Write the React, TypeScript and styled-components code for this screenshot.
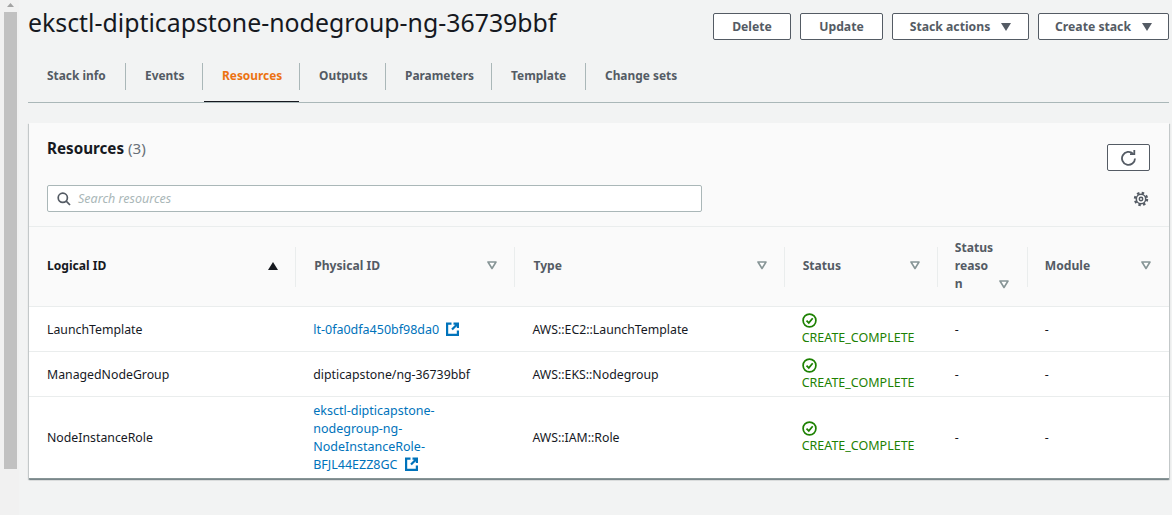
import { FC, ReactNode } from 'react';
import styled, { createGlobalStyle } from 'styled-components';

const GlobalStyle = createGlobalStyle`
  html, body {
    margin: 0;
    padding: 0;
    background: #f2f3f3;
    font-family: "Noto Sans", Roboto, sans-serif;
    overflow: hidden;
  }
`

const Page = styled.div`
  display: flex;
  width: 1172px;
  height: 515px;
  box-sizing: border-box;
  color: #16191f;
`
const Track = styled.div`
  width: 19px;
  flex: none;
  box-sizing: border-box;
  padding-left: 4px;
  background: #f1f1f1;
`
const TrackArrow = styled.div`
  width: 13px;
  height: 12px;
  padding-bottom: 3px;
  box-sizing: border-box;
  display: flex;
  justify-content: center;
  align-items: center;
`
const Thumb = styled.div`
  width: 13px;
  height: 457px;
  background: #c1c1c1;
`
const Main = styled.main`
  flex: 1;
  min-width: 0;
  padding: 0 3px 0 9px;
`
const Header = styled.header`
  display: flex;
  justify-content: space-between;
  height: 63px;
`
const Title = styled.h1`
  margin: 0;
  font-size: 24.85px;
  line-height: 32px;
  font-weight: 400;
  padding-top: 6px;
  color: #16191f;
`
const Actions = styled.div`
  display: flex;
  gap: 9px;
  padding-top: 13px;
`
const Button = styled.button<{ $width: number }>`
  width: ${p => p.$width}px;
  height: 27px;
  box-sizing: border-box;
  display: flex;
  align-items: center;
  justify-content: center;
  gap: 11px;
  padding: 0;
  border: 1px solid #545b64;
  border-radius: 2px;
  background: #fff;
  color: #545b64;
  font: 700 12.2px "Noto Sans", sans-serif;
`
const Tabs = styled.nav`
  display: flex;
  height: 40px;
  border-bottom: 1px solid #aab7b8;
  box-sizing: border-box;
`
const Tab = styled.div<{ $active?: boolean; $width: number }>`
  position: relative;
  width: ${p => p.$width}px;
  height: 27px;
  box-sizing: border-box;
  padding: 4px 0 0 19px;
  font-size: 11.9px;
  font-weight: 700;
  line-height: 16px;
  color: ${p => (p.$active ? '#ec7211' : '#545b64')};
  border-right: 1px solid #aab7b8;
  &:last-child {
    border-right: 0;
  }
  ${p => p.$active && `
    &::after {
      content: '';
      position: absolute;
      left: 1px;
      right: 0;
      bottom: -12px;
      height: 1px;
      background: #16191f;
    }
  `}
`
const Card = styled.section`
  margin: 20px 0 0 1px;
  background: #fff;
  box-shadow: 0 1px 1px 0 rgba(0, 28, 36, 0.3), 1px 1px 1px 0 rgba(0, 28, 36, 0.15), -1px 1px 1px 0 rgba(0, 28, 36, 0.15);
  border-bottom: 1px solid #879596;
`
const CardTop = styled.div`
  display: grid;
  grid-template-columns: 1fr auto;
  grid-template-rows: 47px 27px;
  align-items: center;
  height: 104px;
  box-sizing: border-box;
  padding: 15px 19px 15px 18px;
  background: #fafafa;
  border-bottom: 1px solid #eaeded;
`
const CardTitle = styled.h2`
  margin: 0;
  font-size: 15.2px;
  line-height: 20px;
  font-weight: 700;
  align-self: start;
  color: #16191f;
`
const Count = styled.span`
  font-weight: 400;
  color: #687078;
`
const RefreshButton = styled.button`
  width: 43px;
  height: 27px;
  margin-top: 6px;
  display: flex;
  align-items: center;
  justify-content: center;
  padding: 0;
  border: 1px solid #545b64;
  border-radius: 2px;
  background: #fff;
  color: #545b64;
  justify-self: end;
  align-self: start;
`
const SearchBox = styled.div`
  width: 655px;
  height: 27px;
  box-sizing: border-box;
  display: flex;
  align-items: center;
  gap: 7px;
  padding-left: 9px;
  border: 1px solid #aab7b8;
  border-radius: 2px;
  background: #fff;
  color: #545b64;
`
const SearchText = styled.span`
  font-size: 12.5px;
  font-style: italic;
  color: #aab7b8;
`
const Gear = styled.div`
  display: flex;
  justify-self: end;
  margin-right: 1px;
  color: #545b64;
`
const Table = styled.table`
  width: 100%;
  table-layout: fixed;
  border-collapse: collapse;
`
const HeadCell = styled.th<{ $width: number }>`
  width: ${p => p.$width}px;
  height: 79px;
  padding: 0;
  text-align: left;
  background: #fafafa;
  border-bottom: 1px solid #eaeded;
  vertical-align: middle;
`
const HeadInner = styled.div<{ $last?: boolean }>`
  position: relative;
  box-sizing: border-box;
  height: 40px;
  display: flex;
  align-items: center;
  justify-content: space-between;
  padding: 0 ${p => (p.$last ? 18 : 17)}px 2px ${p => (p.$last ? 17 : 18)}px;
  border-right: ${p => (p.$last ? '0' : '1px solid #eaeded')};
`
const HeadLabel = styled.span<{ $sorted?: boolean }>`
  font-size: 12.1px;
  line-height: 18px;
  font-weight: 700;
  color: ${p => (p.$sorted ? '#16191f' : '#545b64')};
`
const WrappedHead = styled(HeadInner)`
  align-items: flex-end;
  padding: 0 18px 0 17px;
  & > svg {
    margin-bottom: -2px;
  }
`
const WrappedLabel = styled(HeadLabel)`
  width: 40px;
  margin-bottom: -6px;
  word-break: break-all;
  flex: none;
`
const Row = styled.tr<{ $height: number }>`
  height: ${p => p.$height}px;
  & + tr td {
    border-top: 1px solid #eaeded;
  }
`
const Cell = styled.td`
  padding: 1px 18px 0 17px;
  font-size: 12.3px;
  line-height: 18px;
  color: #16191f;
  vertical-align: middle;
  overflow-wrap: break-word;
  &:first-child {
    padding-left: 18px;
  }
`
const Link = styled.a`
  color: #0073bb;
  font-size: 12.5px;
  text-decoration: none;
`
const ExternalIcon = styled.svg`
  display: inline-block;
  vertical-align: -2px;
  margin-left: 7px;
`
const StatusText = styled.div`
  color: #1d8102;
  display: flex;
  flex-direction: column;
  align-items: flex-start;
  line-height: 18px;
  white-space: nowrap;
  font-size: 12.5px;
`
const StatusIcon = styled.svg`
  display: block;
  margin: 1px 0;
`

const Caret: FC<{ color?: string }> = ({ color = '#545b64' }) => (
  <svg width="10" height="8" viewBox="0 0 10 8">
    <path d="M0 0h10L5 8z" fill={color} />
  </svg>
)

const FilterCaret: FC = () => (
  <svg width="10" height="9" viewBox="0 0 10 9" style={{ flex: 'none' }}>
    <path d="M1 1h8L5 7.5z" fill="#fff" stroke="#879596" strokeWidth="1.6" strokeLinejoin="round" />
  </svg>
)

const SortUp: FC = () => (
  <svg width="10" height="8" viewBox="0 0 10 8" style={{ flex: 'none' }}>
    <path d="M0 8h10L5 0z" fill="#16191f" />
  </svg>
)

const External: FC = () => (
  <ExternalIcon width="13" height="14" viewBox="0 0 13 14" fill="none" stroke="#0073bb" strokeWidth="2.2">
    <path d="M5.500 1.600H1.100v11.300h10.800V8.500" />
    <path d="M7.500 1.600h4.400V6M11.500 2 6 7.500" />
  </ExternalIcon>
)

const StatusCheck: FC = () => (
  <StatusIcon width="15" height="15" viewBox="0 0 15 15" fill="none" stroke="#1d8102" strokeWidth="1.7">
    <circle cx="7.500" cy="7.500" r="6.400" />
    <path d="M4.500 7.600 6.800 9.900 10.700 5.200" />
  </StatusIcon>
)

const Status: FC = () => (
  <StatusText>
    <StatusCheck />
    CREATE_COMPLETE
  </StatusText>
)

interface ResourceRow {
  logicalId: string;
  physicalId: ReactNode;
  type: string;
  height: number;
}

const rows: ResourceRow[] = [
  {
    logicalId: 'LaunchTemplate',
    physicalId: <Link>lt-0fa0dfa450bf98da0<External /></Link>,
    type: 'AWS::EC2::LaunchTemplate',
    height: 45,
  },
  {
    logicalId: 'ManagedNodeGroup',
    physicalId: 'dipticapstone/ng-36739bbf',
    type: 'AWS::EKS::Nodegroup',
    height: 45,
  },
  {
    logicalId: 'NodeInstanceRole',
    physicalId: <Link>eksctl-dipticapstone-nodegroup-ng-NodeInstanceRole-BFJL44EZZ8GC<External /></Link>,
    type: 'AWS::IAM::Role',
    height: 81,
  },
]

const tabs = [
  { label: 'Stack info', width: 98 },
  { label: 'Events', width: 77 },
  { label: 'Resources', width: 97, active: true },
  { label: 'Outputs', width: 86 },
  { label: 'Parameters', width: 106 },
  { label: 'Template', width: 94 },
  { label: 'Change sets', width: 120 },
]

const App: FC = () => (
  <>
    <GlobalStyle />
    <Page>
      <Track>
        <TrackArrow>
          <svg width="7" height="4" viewBox="0 0 7 4"><path d="M0 4h7L3.500 0z" fill="#a3a3a3" /></svg>
        </TrackArrow>
        <Thumb />
      </Track>
      <Main>
        <Header>
          <Title>eksctl-dipticapstone-nodegroup-ng-36739bbf</Title>
          <Actions>
            <Button $width={78}>Delete</Button>
            <Button $width={83}>Update</Button>
            <Button $width={137}>Stack actions <Caret /></Button>
            <Button $width={131}>Create stack <Caret /></Button>
          </Actions>
        </Header>
        <Tabs>
          {tabs.map(t => (
            <Tab key={t.label} $active={t.active} $width={t.width}>{t.label}</Tab>
          ))}
        </Tabs>
        <Card>
          <CardTop>
            <CardTitle>Resources <Count>(3)</Count></CardTitle>
            <RefreshButton aria-label="Refresh">
              <svg width="17" height="17" viewBox="0 0 17 17" fill="none" stroke="currentColor" strokeWidth="1.8">
                <path d="M15 9.500A6.500 6.500 0 1 1 13 4.700" />
                <path d="M14.300 1v4.200H10" />
              </svg>
            </RefreshButton>
            <SearchBox>
              <svg width="14" height="14" viewBox="0 0 14 14" fill="none" stroke="currentColor" strokeWidth="1.7">
                <circle cx="5.800" cy="5.800" r="4.600" />
                <path d="M9.200 9.200 13 13" />
              </svg>
              <SearchText>Search resources</SearchText>
            </SearchBox>
            <Gear>
              <svg width="16" height="16" viewBox="0 0 16 16" fill="none" stroke="currentColor">
                <circle cx="8" cy="8" r="6" strokeWidth="2.400" strokeDasharray="2.400 2.312" />
                <circle cx="8" cy="8" r="4.700" strokeWidth="1.500" />
                <circle cx="8" cy="8" r="1.700" strokeWidth="1.500" />
              </svg>
            </Gear>
          </CardTop>
          <Table>
            <thead>
              <tr>
                <HeadCell $width={267}>
                  <HeadInner><HeadLabel $sorted>Logical ID</HeadLabel><SortUp /></HeadInner>
                </HeadCell>
                <HeadCell $width={219}>
                  <HeadInner><HeadLabel>Physical ID</HeadLabel><FilterCaret /></HeadInner>
                </HeadCell>
                <HeadCell $width={269}>
                  <HeadInner><HeadLabel>Type</HeadLabel><FilterCaret /></HeadInner>
                </HeadCell>
                <HeadCell $width={153}>
                  <HeadInner><HeadLabel>Status</HeadLabel><FilterCaret /></HeadInner>
                </HeadCell>
                <HeadCell $width={90}>
                  <WrappedHead><WrappedLabel>Status reason</WrappedLabel><FilterCaret /></WrappedHead>
                </HeadCell>
                <HeadCell $width={141}>
                  <HeadInner $last><HeadLabel>Module</HeadLabel><FilterCaret /></HeadInner>
                </HeadCell>
              </tr>
            </thead>
            <tbody>
              {rows.map(r => (
                <Row key={r.logicalId} $height={r.height}>
                  <Cell>{r.logicalId}</Cell>
                  <Cell>{r.physicalId}</Cell>
                  <Cell>{r.type}</Cell>
                  <Cell><Status /></Cell>
                  <Cell>-</Cell>
                  <Cell>-</Cell>
                </Row>
              ))}
            </tbody>
          </Table>
        </Card>
      </Main>
    </Page>
  </>
)

export default App;
